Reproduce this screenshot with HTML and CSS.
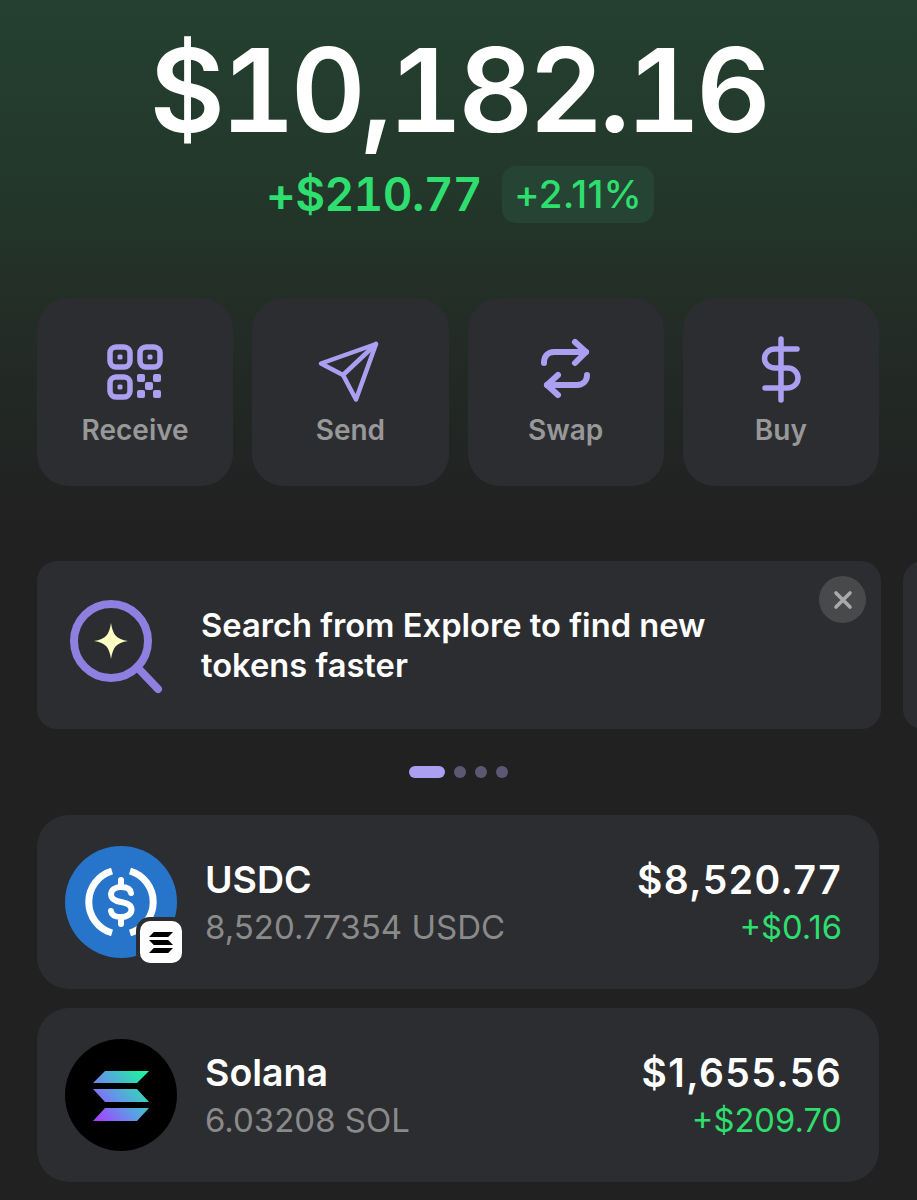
FILE: index.html
```html
<!DOCTYPE html>
<html lang="en">
<head>
<meta charset="utf-8">
<title>Wallet</title>
<link rel="stylesheet" href="styles.css">
</head>
<body>
<main class="page">
  <section class="balance">
    <h1 class="total">$10,182.16</h1>
    <div class="change">
      <span class="change-abs">+$210.77</span>
      <span class="change-pct">+2.11%</span>
    </div>
  </section>

  <section class="actions">
    <div class="action">
      <svg class="action-icon" viewBox="0 0 60 60" fill="none">
        <g stroke="#ab9ff2" stroke-width="5.5">
          <rect x="5" y="5" width="20" height="20" rx="6"/>
          <rect x="35" y="5" width="20" height="20" rx="6"/>
          <rect x="5" y="35" width="20" height="20" rx="6"/>
        </g>
        <g fill="#ab9ff2">
          <rect x="12.500" y="12.500" width="5" height="5" rx="1.500"/>
          <rect x="42.500" y="12.500" width="5" height="5" rx="1.500"/>
          <rect x="12.500" y="42.500" width="5" height="5" rx="1.500"/>
          <rect x="32" y="32" width="8" height="8" rx="2"/>
          <rect x="48" y="32" width="8" height="8" rx="2"/>
          <rect x="40" y="40" width="8" height="8" rx="2"/>
          <rect x="32" y="48" width="8" height="8" rx="2"/>
          <rect x="48" y="48" width="8" height="8" rx="2"/>
        </g>
      </svg>
      <span class="action-label">Receive</span>
    </div>
    <div class="action">
      <svg class="action-icon" viewBox="0 0 60 60" fill="none" stroke="#ab9ff2" stroke-width="4.5" stroke-linejoin="round" stroke-linecap="round">
        <path d="M56 2 L1 21.500 L23 33 L36 57.500 Z"/>
        <path d="M56 2 L23 33"/>
      </svg>
      <span class="action-label">Send</span>
    </div>
    <div class="action">
      <svg class="action-icon" viewBox="0 0 60 60" fill="none" stroke="#ab9ff2" stroke-width="6" stroke-linejoin="round" stroke-linecap="round">
        <path d="M8 21 C8 14 12 10 18 10 H50"/>
        <path d="M39 0 L50 10 L39 21"/>
        <path d="M51 33 C51 39 47 43 41 43 H11"/>
        <path d="M22 33 L11 43 L22 53"/>
      </svg>
      <span class="action-label">Swap</span>
    </div>
    <div class="action">
      <svg class="action-icon" viewBox="0 0 60 60" fill="none" stroke="#ab9ff2" stroke-width="5.500" stroke-linejoin="round" stroke-linecap="round">
        <path d="M30 -3 V58"/>
        <path d="M46 7 H24 C17 7 13.500 12 13.500 16.500 C13.500 22 18 26 24 26 H37 C43 26 47 31 47 36 C47 41 43 46 36 46 H14"/>
      </svg>
      <span class="action-label">Buy</span>
    </div>
  </section>

  <section class="carousel">
    <div class="banner">
      <svg class="banner-icon" viewBox="0 0 92 92" fill="none">
        <circle cx="41" cy="41" r="37" stroke="#8f7fe0" stroke-width="8"/>
        <path d="M67 67 L88 89" stroke="#8f7fe0" stroke-width="8" stroke-linecap="round"/>
        <path d="M41 23 C43 35 46 39 58 41 C46 43 43 47 41 59 C39 47 36 43 24 41 C36 39 39 35 41 23 Z" fill="#ffffc4"/>
      </svg>
      <p class="banner-text">Search from Explore to find new tokens faster</p>
      <span class="banner-close">
        <svg viewBox="0 0 20 20" fill="none" stroke="#aaaaaa" stroke-width="3.600" stroke-linecap="round"><path d="M3 3 L17 17 M17 3 L3 17"/></svg>
      </span>
    </div>
    <div class="banner-next"></div>
  </section>

  <div class="dots">
    <span class="dot dot-active"></span>
    <span class="dot"></span>
    <span class="dot"></span>
    <span class="dot"></span>
  </div>

  <section class="tokens">
    <article class="token">
      <div class="token-logo">
        <svg class="logo-svg" viewBox="0 0 112 112">
          <circle cx="56" cy="56" r="56" fill="#2775ca"/>
          <path d="M47 25 A32.300 32.300 0 0 0 47 87" fill="none" stroke="#fff" stroke-width="7"/>
          <path d="M65 25 A32.300 32.300 0 0 1 65 87" fill="none" stroke="#fff" stroke-width="7"/>
          <path d="M66 47 C65.500 43 62 41 56 41 C50 41 46 44 46 48.500 C46 53 50 55 56 56 C62 57 66.500 59 66.500 63.500 C66.500 68 62 71 56 71 C50 71 46.500 69 46 65 M56 34 V41 M56 71 V78" fill="none" stroke="#fff" stroke-width="6" stroke-linecap="round"/>
        </svg>
        <span class="chain-badge">
          <svg viewBox="0 0 30 26"><path d="M6 0 H30 L24 6 H0 Z M0 10 H24 L30 16 H6 Z M6 20 H30 L24 26 H0 Z" fill="#000"/></svg>
        </span>
      </div>
      <div class="token-info">
        <div class="token-name">USDC</div>
        <div class="token-qty">8,520.77354 USDC</div>
      </div>
      <div class="token-values">
        <div class="token-value">$8,520.77</div>
        <div class="token-delta">+$0.16</div>
      </div>
    </article>
    <article class="token">
      <div class="token-logo">
        <svg class="logo-svg" viewBox="0 0 112 112">
          <defs>
            <linearGradient id="sol" gradientUnits="userSpaceOnUse" x1="28" y1="80" x2="84" y2="32">
              <stop offset="0" stop-color="#a83cff"/>
              <stop offset="0.45" stop-color="#5f9be6"/>
              <stop offset="1" stop-color="#15ff95"/>
            </linearGradient>
          </defs>
          <circle cx="56" cy="56" r="56"/>
          <path d="M40 32 H84 L72 44 H28 Z M28 50 H72 L84 63 H40 Z M40 69 H84 L72 82 H28 Z" fill="url(#sol)"/>
        </svg>
      </div>
      <div class="token-info">
        <div class="token-name">Solana</div>
        <div class="token-qty">6.03208 SOL</div>
      </div>
      <div class="token-values">
        <div class="token-value">$1,655.56</div>
        <div class="token-delta">+$209.70</div>
      </div>
    </article>
  </section>
</main>
</body>
</html>
```
FILE: styles.css
```css
* { box-sizing: border-box; }
html, body { margin: 0; padding: 0; }
body {
  width: 917px;
  height: 1200px;
  overflow: hidden;
  background: #212121;
  font-family: Inter, "Liberation Sans", sans-serif;
}
.page {
  height: 1200px;
  padding: 0 38px 0 37px;
  background: linear-gradient(180deg, #244030 0, #233a2b 150px, #232e27 300px, #212121 520px);
  overflow: hidden;
}
.balance {
  display: flex;
  flex-direction: column;
  align-items: center;
  padding-top: 25px;
  height: 298px;
}
.total {
  margin: 0;
  font-size: 116px;
  line-height: 130px;
  font-weight: 600;
  font-variant-numeric: tabular-nums;
  letter-spacing: -4.6px;
  color: #fff;
}
.change {
  display: flex;
  align-items: center;
  gap: 20px;
  height: 58px;
  margin-top: 10px;
  padding-left: 4px;
}
.change-abs {
  font-size: 46px;
  font-weight: 600;
  font-variant-numeric: tabular-nums;
  letter-spacing: -0.6px;
  color: #2ede6f;
}
.change-pct {
  display: flex;
  align-items: center;
  height: 57px;
  padding: 0 12px;
  border-radius: 14px;
  background: #254433;
  font-size: 38.5px;
  font-weight: 500;
  letter-spacing: 0.2px;
  color: #2ede6f;
}
.actions {
  display: grid;
  grid-template-columns: repeat(4, 1fr);
  column-gap: 19px;
  height: 188px;
}
.action {
  display: flex;
  flex-direction: column;
  align-items: center;
  padding-top: 44px;
  border-radius: 32px;
  background: #2c2d30;
}
.action-icon {
  width: 60px;
  height: 60px;
  overflow: visible;
}
.action-label {
  margin-top: 11px;
  font-size: 28px;
  line-height: 34px;
  font-weight: 600;
  color: #989898;
}
.carousel {
  display: flex;
  gap: 22px;
  margin-top: 75px;
  height: 168px;
}
.banner {
  position: relative;
  flex: 0 0 844px;
  display: flex;
  align-items: center;
  gap: 39px;
  padding: 0 33px;
  border-radius: 20px;
  background: #2c2d30;
}
.banner-icon {
  flex: none;
  width: 92px;
  height: 92px;
  margin-top: 2px;
  overflow: visible;
}
.banner-text {
  margin: 0;
  width: 560px;
  font-size: 32.7px;
  line-height: 40px;
  font-weight: 600;
  color: #fff;
}
.banner-close {
  position: absolute;
  top: 15px;
  right: 15px;
  width: 47px;
  height: 47px;
  border-radius: 50%;
  background: #48494b;
  display: flex;
  align-items: center;
  justify-content: center;
}
.banner-close svg {
  width: 20px;
  height: 20px;
}
.banner-next {
  flex: 0 0 60px;
  border-radius: 20px 0 0 20px;
  background: #2c2d30;
}
.dots {
  display: flex;
  justify-content: center;
  align-items: center;
  gap: 9px;
  height: 86px;
  padding-left: 1px;
}
.dot {
  width: 12px;
  height: 12px;
  border-radius: 50%;
  background: #5c5873;
}
.dot-active {
  width: 36px;
  border-radius: 6px;
  background: #ab9ff2;
}
.tokens {
  display: flex;
  flex-direction: column;
  gap: 19px;
}
.token {
  display: flex;
  align-items: center;
  height: 174px;
  padding: 0 38px 0 28px;
  border-radius: 32px;
  background: #2c2d30;
}
.token-logo {
  position: relative;
  flex: none;
  width: 112px;
  height: 112px;
}
.logo-svg {
  display: block;
  width: 112px;
  height: 112px;
}
.chain-badge {
  position: absolute;
  right: -9px;
  bottom: -9px;
  width: 50px;
  height: 50px;
  border: 4px solid #2c2d30;
  border-radius: 14px;
  background: #fff;
  display: flex;
  align-items: center;
  justify-content: center;
}
.chain-badge svg {
  width: 24px;
  height: 21px;
}
.token-info {
  flex: 1;
  margin-left: 28px;
  padding-top: 3px;
}
.token-name {
  font-size: 37.5px;
  line-height: 46px;
  font-weight: 600;
  color: #fff;
}
.token-qty {
  margin-top: 1px;
  font-size: 33px;
  line-height: 46px;
  font-weight: 400;
  color: #8a8a8a;
}
.token-values {
  padding-top: 3px;
  margin-right: -1px;
  text-align: right;
}
.token-value {
  font-size: 39px;
  line-height: 46px;
  font-weight: 600;
  letter-spacing: 1.4px;
  color: #fff;
}
.token-delta {
  margin-top: 1px;
  font-size: 32.7px;
  line-height: 46px;
  font-weight: 400;
  color: #2ede6f;
}
```
